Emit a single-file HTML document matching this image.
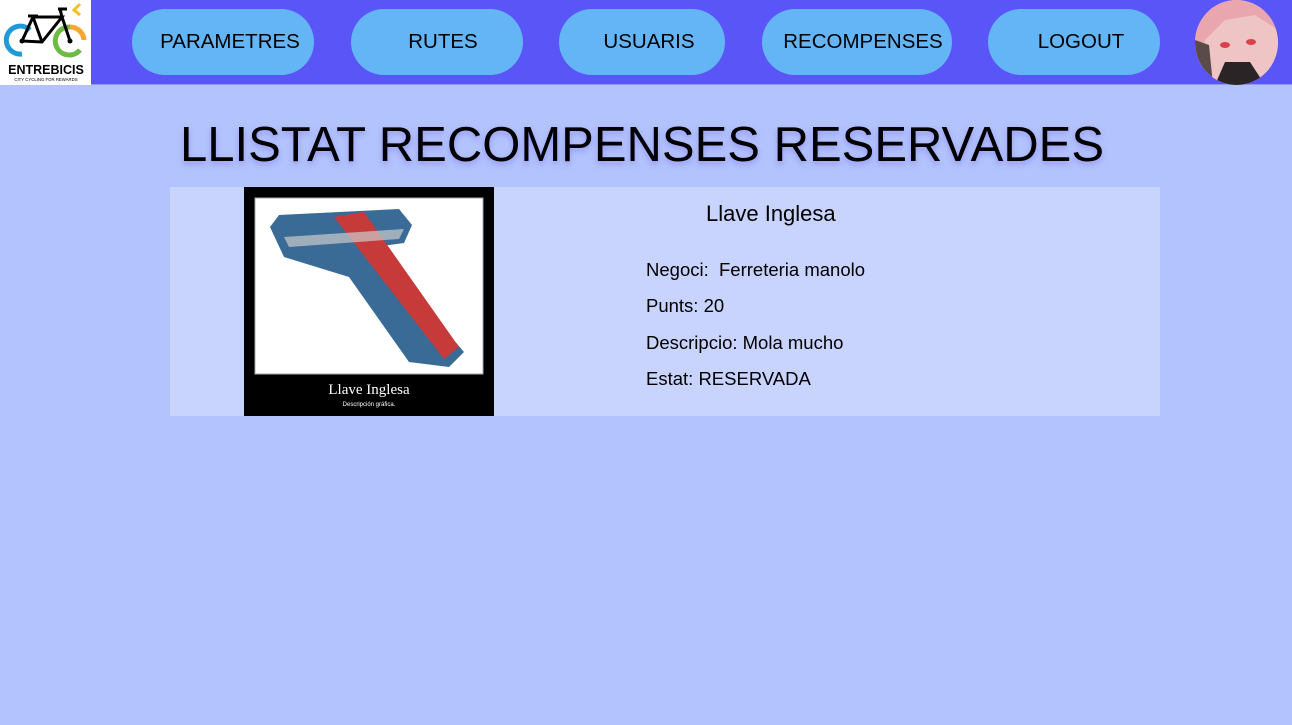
<!DOCTYPE html>
<html><head><meta charset="utf-8"><style>
*{margin:0;padding:0;box-sizing:border-box}
body{width:1292px;height:725px;background:#b3c3fd;font-family:"Liberation Sans",sans-serif;position:relative;overflow:hidden}
.hdr{position:absolute;left:0;top:0;width:1292px;height:85px;background:#5a55f6;border-bottom:1px solid #8f9af8}
.logo{position:absolute;left:0;top:0;width:91px;height:85px;background:#fff}
.btn{position:absolute;top:9px;height:66px;border-radius:33px;background:#64b5f6;color:#000;font-size:20.5px;line-height:66px;text-align:center}
.av{position:absolute;left:1195px;top:0;width:83px;height:85px;border-radius:50%;overflow:hidden;background:#e8b3b8}
h1{position:absolute;left:0;width:1284px;top:117px;text-align:center;font-weight:normal;font-size:49px;color:#000;text-shadow:0 3px 6px rgba(120,110,240,.5)}
.card{position:absolute;left:170px;top:187px;width:990px;height:229px;background:#c8d3fe}
.img{position:absolute;left:74px;top:0;width:250px;height:229px;background:#000}
.t{position:absolute;font-size:18.5px;color:#000}
</style></head><body>
<div class="hdr">
<div class="logo">
<svg width="91" height="85" viewBox="0 0 91 85">
<path d="M22 54 A14 14 0 1 1 30 30" fill="none" stroke="#1f9ad6" stroke-width="5"/>
<path d="M80 50 A14 14 0 1 1 70 27" fill="none" stroke="#6cbb45" stroke-width="5"/>
<path d="M70 27 A14 14 0 0 1 84 40" fill="none" stroke="#f4a733" stroke-width="5"/>
<circle cx="22" cy="41" r="2.5"/><circle cx="70" cy="41" r="2.5"/>
<path d="M22 41 L33 17 L62 17 L42 42 Z M33 17 L42 42 M62 17 L70 41 M28 16 L38 16 M58 9 L67 9 M62 17 L60 9" fill="none" stroke="#000" stroke-width="3"/>
<path d="M80 4 L74 10 L80 15" fill="none" stroke="#f4c020" stroke-width="3"/>
<text x="46" y="74" text-anchor="middle" font-size="12.5" font-weight="bold" font-family="Liberation Sans">ENTREBICIS</text>
<text x="46" y="81" text-anchor="middle" font-size="4.3" font-family="Liberation Sans">CITY CYCLING FOR REWARDS</text>
</svg></div>
<div class="btn" style="left:132px;width:182px;padding-left:14px">PARAMETRES</div>
<div class="btn" style="left:351px;width:172px;padding-left:12px">RUTES</div>
<div class="btn" style="left:559px;width:166px;padding-left:14px">USUARIS</div>
<div class="btn" style="left:762px;width:190px;padding-left:12px">RECOMPENSES</div>
<div class="btn" style="left:988px;width:172px;padding-left:14px">LOGOUT</div>
<div class="av"><svg width="83" height="85"><rect width="83" height="85" fill="#efc4c4"/><path d="M0 0 H83 V30 L60 15 L30 20 L10 40 L0 85Z" fill="#e9a6ae"/><path d="M20 85 L30 62 L55 62 L70 85Z" fill="#2a2426"/><path d="M0 40 L14 45 L18 85 H0Z" fill="#5a4a4a"/><ellipse cx="30" cy="45" rx="5" ry="3" fill="#d9404a"/><ellipse cx="56" cy="42" rx="5" ry="3" fill="#d9404a"/></svg></div>
</div>
<h1>LLISTAT RECOMPENSES RESERVADES</h1>
<div class="card">
<div class="img">
<svg width="250" height="229">
<rect x="11" y="11" width="228" height="176" fill="#fff" stroke="#aaa"/>
<path d="M26 40 L35 28 L155 22 L168 38 L160 56 L130 60 L220 165 L205 180 L165 175 L105 90 L40 70 Z" fill="#3a6a96"/>
<path d="M90 30 L120 25 L215 160 L200 172 Z" fill="#c73a3a"/>
<path d="M40 50 L160 42 L155 52 L45 60 Z" fill="#ccc" opacity=".7"/>
<text x="125" y="207" text-anchor="middle" fill="#fff" font-family="Liberation Serif" font-size="15">Llave Inglesa</text>
<text x="125" y="219" text-anchor="middle" fill="#fff" font-size="6">Descripción gráfica.</text>
</svg></div>
<div class="t" style="left:536px;top:14px;font-size:22px">Llave Inglesa</div>
<div class="t" style="left:476px;top:72px">Negoci:&nbsp; Ferreteria manolo</div>
<div class="t" style="left:476px;top:108px">Punts: 20</div>
<div class="t" style="left:476px;top:145px">Descripcio: Mola mucho</div>
<div class="t" style="left:476px;top:181px">Estat: RESERVADA</div>
</div>
</body></html>
